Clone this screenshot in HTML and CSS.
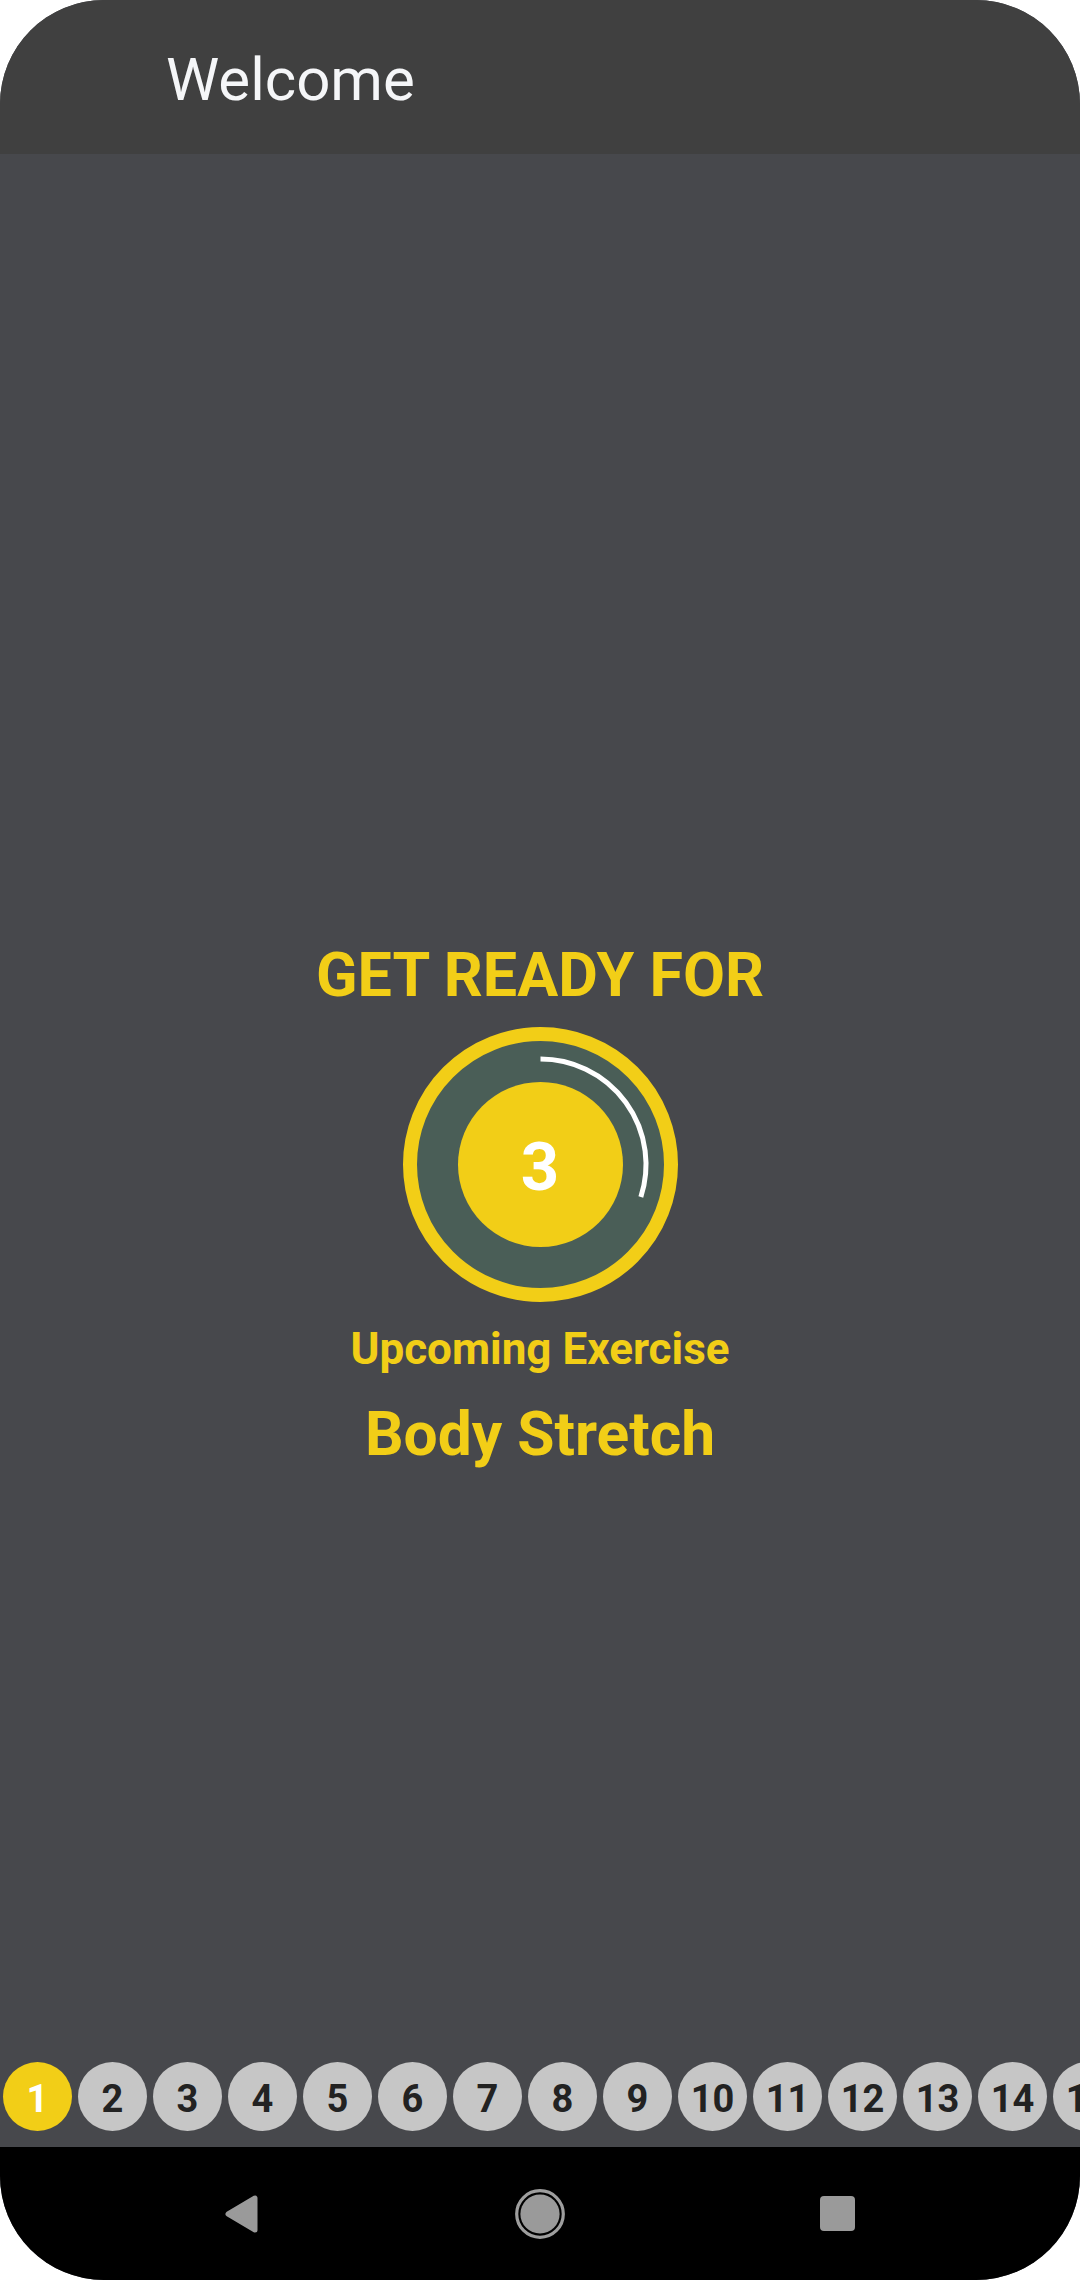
FILE: index.html
```html
<!DOCTYPE html>
<html lang="en">
<head>
<meta charset="utf-8">
<title>Welcome</title>
<link rel="stylesheet" href="styles.css">
</head>
<body>
<div class="app">
  <header class="toolbar">
    <span class="title">Welcome</span>
  </header>
  <main class="main">
    <section class="ready">
      <h1 class="ready-title">GET READY FOR</h1>
      <div class="timer">
        <svg class="timer-svg" width="275" height="275" viewBox="0 0 275 275">
          <circle cx="137.5" cy="137.5" r="130.5" fill="#4a5e57" stroke="#f2ce17" stroke-width="14"/>
          <circle cx="137.5" cy="137.5" r="82.5" fill="#f2ce17"/>
          <path d="M137.5 32 A105.5 105.5 0 0 1 237.84 170.1" fill="none" stroke="#ffffff" stroke-width="5"/>
        </svg>
        <span class="timer-count">3</span>
      </div>
      <p class="upcoming">Upcoming Exercise</p>
      <p class="exercise">Body Stretch</p>
    </section>
    <div class="steps">
      <span class="step active">1</span>
      <span class="step">2</span>
      <span class="step">3</span>
      <span class="step">4</span>
      <span class="step">5</span>
      <span class="step">6</span>
      <span class="step">7</span>
      <span class="step">8</span>
      <span class="step">9</span>
      <span class="step">10</span>
      <span class="step">11</span>
      <span class="step">12</span>
      <span class="step">13</span>
      <span class="step">14</span>
      <span class="step">15</span>
    </div>
  </main>
  <nav class="navbar">
    <svg class="nav-back" width="36" height="42" viewBox="0 0 36 42">
      <polygon points="4,21 31,5 31,37" fill="#9a9a9a" stroke="#9a9a9a" stroke-width="5" stroke-linejoin="round"/>
    </svg>
    <svg class="nav-home" width="50" height="50" viewBox="0 0 50 50">
      <circle cx="25" cy="25" r="23.3" fill="none" stroke="#9e9e9e" stroke-width="3.2"/>
      <circle cx="25" cy="25" r="19.6" fill="#9a9a9a"/>
    </svg>
    <span class="nav-recent"></span>
  </nav>
</div>
</body>
</html>
```

FILE: styles.css
```css
html, body {
  margin: 0;
  padding: 0;
  background: #ffffff;
}

.app {
  width: 1080px;
  height: 2280px;
  border-radius: 104px;
  overflow: hidden;
  display: flex;
  flex-direction: column;
  background: #47484c;
  font-family: Roboto, "Liberation Sans", sans-serif;
}

.toolbar {
  height: 154px;
  flex: 0 0 154px;
  box-sizing: border-box;
  background: #404040;
  padding: 45px 0 0 166px;
}

.title {
  display: block;
  font-size: 60px;
  line-height: 1.172;
  font-weight: 400;
  color: #f5f6f8;
}

.main {
  flex: 1;
  display: flex;
  flex-direction: column;
  min-height: 0;
}

.ready {
  margin-top: 786px;
  display: flex;
  flex-direction: column;
  align-items: center;
}

.ready-title {
  margin: 0;
  font-size: 61px;
  line-height: 1.172;
  font-weight: 700;
  color: #f2ce17;
}

.timer {
  margin-top: 16px;
  display: grid;
  width: 275px;
  height: 275px;
}

.timer-svg {
  grid-area: 1 / 1;
  display: block;
}

.timer-count {
  grid-area: 1 / 1;
  align-self: center;
  justify-self: center;
  padding-top: 5px;
  font-size: 67px;
  line-height: 1.172;
  font-weight: 700;
  color: #ffffff;
}

.upcoming {
  margin: 22px 0 0;
  font-size: 44px;
  line-height: 1.172;
  font-weight: 700;
  color: #f2ce17;
}

.exercise {
  margin: 24px 0 0;
  font-size: 60.5px;
  line-height: 1.172;
  font-weight: 700;
  color: #f2ce17;
}

.steps {
  margin-top: auto;
  display: flex;
  gap: 6px;
  padding: 0 0 16px 3px;
  overflow: hidden;
}

.step {
  flex: 0 0 69px;
  width: 69px;
  height: 69px;
  border-radius: 50%;
  background: #c6c6c6;
  color: #222222;
  font-size: 38px;
  font-weight: 700;
  display: flex;
  align-items: center;
  justify-content: center;
  padding-top: 5px;
  box-sizing: border-box;
}

.step.active {
  background: #f2ce17;
  color: #ffffff;
}

.navbar {
  height: 133px;
  flex: 0 0 133px;
  background: #000000;
  display: flex;
  align-items: center;
  padding-left: 224px;
}

.nav-back {
  display: block;
}

.nav-home {
  display: block;
  margin-left: 255px;
}

.nav-recent {
  display: block;
  width: 35px;
  height: 35px;
  margin-left: 255px;
  border-radius: 4px;
  background: #9a9a9a;
}
```
